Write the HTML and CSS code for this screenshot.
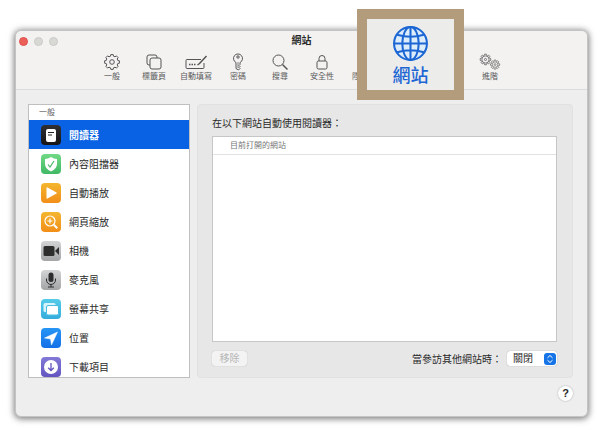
FILE: index.html
```html
<!DOCTYPE html>
<html lang="zh-Hant">
<head>
    <meta charset="UTF-8">
    <title>網站</title>
    <meta name="viewport" content="width=device-width, initial-scale=1.0">
    <link rel="stylesheet" href="styles.css">
</head>
<body>
    <div class="window">
        <header class="toolbar">
            <div class="titlebar">
                <div class="lights">
                    <span class="light close"></span>
                    <span class="light"></span>
                    <span class="light"></span>
                </div>
                <h1>網站</h1>
            </div>
            <nav class="tabs">
                <button class="tab">
                    <svg viewBox="0 0 18 18"><path id="gear" d="M16.4 7.800V10.200L14.800 10.500L14.200 12L15.100 13.400L13.400 15.100L12 14.200L10.500 14.800L10.200 16.400H7.800L7.500 14.800L6 14.200L4.600 15.100L2.900 13.400L3.800 12L3.200 10.500L1.600 10.200V7.800L3.200 7.500L3.800 6L2.900 4.600L4.600 2.900L6 3.800L7.500 3.200L7.800 1.600H10.200L10.500 3.200L12 3.800L13.400 2.900L15.100 4.600L14.200 6L14.800 7.500Z"/><circle cx="9" cy="9" r="2.300"/></svg>
                    <span>一般</span>
                </button>
                <button class="tab">
                    <svg viewBox="0 0 18 18"><path d="M5 12H4a2 2 0 0 1-2-2V4a2 2 0 0 1 2-2h6a2 2 0 0 1 2 2v1"/><rect x="5" y="5" width="11" height="11" rx="2"/></svg>
                    <span>標籤頁</span>
                </button>
                <button class="tab">
                    <svg class="wide" viewBox="0 0 24 18"><path d="M17 6.500H3a1 1 0 0 0-1 1v7a1 1 0 0 0 1 1h16a1 1 0 0 0 1-1V10"/><path d="M22.500 3l-7 7.500-2 1.500" stroke-width="1.500"/><path d="M5 11.500h7" stroke-width="1.500" stroke-dasharray="1.500 1"/></svg>
                    <span>自動填寫</span>
                </button>
                <button class="tab">
                    <svg viewBox="0 0 18 18"><path d="M7 9.500a4.500 4.500 0 1 1 4 0v2l-1 1 1 1-1 1 1 1-1.500 1.500-2.500-1.500z"/><circle cx="9" cy="4" r="1.200"/><path d="M9 9v6" stroke-width=".7"/></svg>
                    <span>密碼</span>
                </button>
                <button class="tab">
                    <svg viewBox="0 0 18 18"><circle cx="7.500" cy="7.500" r="5.500"/><path d="M11.500 11.500l5 5" stroke-width="1.500"/></svg>
                    <span>搜尋</span>
                </button>
                <button class="tab">
                    <svg viewBox="0 0 18 18"><rect x="4" y="8" width="10" height="8" rx="1.500"/><path d="M6 8V5.500a3 3 0 0 1 6 0V8"/></svg>
                    <span>安全性</span>
                </button>
                <button class="tab"><span>隱私權</span></button>
                <div class="current">
                    <button class="callout">
                        <svg viewBox="0 0 36 36"><circle cx="18" cy="18" r="16"/><ellipse cx="18" cy="18" rx="8" ry="16"/><path d="M18 2v32M2 18h32M5 9.500q13 4 26 0M5 26.500q13-4 26 0"/></svg>
                        <span>網站</span>
                    </button>
                </div>
                <button class="tab last">
                    <svg class="wide" viewBox="0 0 24 18"><g transform="translate(1 0) scale(.72)"><use href="#gear"/><circle cx="9" cy="9" r="5"/><circle cx="9" cy="9" r="1.500"/></g><g transform="translate(11.500 6) scale(.62)"><use href="#gear"/><circle cx="9" cy="9" r="4.500"/><circle cx="9" cy="9" r="1.500"/></g></svg>
                    <span>進階</span>
                </button>
            </nav>
        </header>

        <main class="content">
            <aside class="sidebar">
                <h2>一般</h2>
                <ul>
                    <li><button class="row selected">
                        <svg class="reader" viewBox="0 0 20 20"><rect x="5" y="4" width="10" height="13" rx="2" fill="#fff"/><path d="M7 7.500h6M7 10h4" stroke="#222"/></svg>閱讀器</button></li>
                    <li><button class="row">
                        <svg class="blocker" viewBox="0 0 20 20"><path d="M10 3q3 1.800 6 2v5q0 5-6 7.500Q4 15 4 10V5q3-.2 6-2z" fill="#fff"/><path d="M7 10.500l2 2.500 4-6" fill="none" stroke="#45b867" stroke-width="1.200"/></svg>內容阻擋器</button></li>
                    <li><button class="row">
                        <svg class="orange" viewBox="0 0 20 20"><path d="M5.500 5v10q0 1 1 .5l9-5q.8-.5 0-1l-9-5q-1-.5-1 .5z" fill="#fff"/></svg>自動播放</button></li>
                    <li><button class="row">
                        <svg class="orange" viewBox="0 0 20 20"><g fill="none" stroke="#fff" stroke-width="1.200"><circle cx="9" cy="9" r="5"/><path d="M9 6.500v5M6.500 9h5"/><path d="M12.800 12.800l3.500 3.500" stroke-width="2"/></g></svg>網頁縮放</button></li>
                    <li><button class="row">
                        <svg class="gray" viewBox="0 0 20 20"><rect x="2.500" y="5" width="11" height="10" rx="1.500" fill="#2d2d2d"/><path d="M14 10l4-4v8z" fill="#2d2d2d"/></svg>相機</button></li>
                    <li><button class="row">
                        <svg class="gray" viewBox="0 0 20 20"><rect x="7.500" y="2.500" width="5" height="9.500" rx="2.500" fill="#2d2d2d"/><path d="M5.500 8.500v1.500a4.500 4.500 0 0 0 9 0V8.500M10 14.500v2.500M7 17h6" fill="none" stroke="#2d2d2d"/></svg>麥克風</button></li>
                    <li><button class="row">
                        <svg class="cyan" viewBox="0 0 20 20"><rect x="2.500" y="4" width="12" height="9" rx="1.500" fill="#d8f3fc"/><rect x="5.500" y="6.500" width="12" height="9.500" rx="1.500" fill="#fff" stroke="#45bde3"/></svg>螢幕共享</button></li>
                    <li><button class="row">
                        <svg class="blue" viewBox="0 0 20 20"><path d="M16.500 4L3.500 10l6 1 1 6z" fill="#fff" stroke="#fff" stroke-linejoin="round" stroke-width=".5"/></svg>位置</button></li>
                    <li><button class="row">
                        <svg class="purple" viewBox="0 0 20 20"><circle cx="10" cy="10" r="7" fill="#fff"/><path d="M10 6v7.500M7.200 10.800L10 13.500l2.800-2.700" fill="none" stroke="#6354c0" stroke-width="1.300"/></svg>下載項目</button></li>
                </ul>
            </aside>

            <section class="panel">
                <h2>在以下網站自動使用閱讀器：</h2>
                <div class="sites">
                    <h3>目前打開的網站</h3>
                </div>
                <div class="actions">
                    <button class="remove" disabled>移除</button>
                    <label for="other">當參訪其他網站時：</label>
                    <div class="select">
                        <select id="other">
                            <option>關閉</option>
                            <option>開啟</option>
                        </select>
                        <svg viewBox="0 0 12 12"><rect width="12" height="12" rx="3" fill="#1674e6"/><path d="M3.500 4.800L6 2.500l2.500 2.300M3.500 7.200L6 9.500l2.500-2.300" fill="none" stroke="#fff"/></svg>
                    </div>
                </div>
            </section>
        </main>

        <footer class="footer">
            <button class="help">?</button>
        </footer>
    </div>
</body>
</html>
```

FILE: styles.css
```css
* {
    box-sizing: border-box;
}
body {
    margin: 0;
    padding: 30px 23px 14px 15px;
    background: #fff;
    color: #292929;
    font-family: "Liberation Sans", "Noto Sans CJK TC", sans-serif;
    font-size: 12px;
}
h1, h2, h3, ul {
    margin: 0;
    padding: 0;
    font-weight: normal;
}
button {
    padding: 0;
    border: none;
    background: none;
    color: inherit;
    font: inherit;
}
svg {
    flex: none;
}
.window {
    background: #eee;
    border: 1px solid #c4c4c4;
    border-radius: 6px;
    box-shadow: 0 1px 6px 1px rgba(0, 0, 0, 0.5);
}

/* Toolbar */
.toolbar {
    height: 59px;
    border-bottom: 1px solid #dcdcdc;
    border-radius: 6px 6px 0 0;
    background: #f3f2f1;
}
.titlebar {
    display: grid;
    grid-template-columns: 1fr auto 1fr;
    align-items: center;
    height: 20px;
}
.titlebar h1 {
    font-size: 10px;
    line-height: 20px;
    font-weight: bold;
}
.lights {
    display: flex;
    gap: 6px;
    padding-left: 3px;
}
.light {
    width: 9px;
    height: 9px;
    border: 1px solid #cacac8;
    border-radius: 50%;
    background: #d8d8d5;
}
.light.close {
    border-color: #df514c;
    background: #ec5f59;
}
.tabs {
    display: grid;
    grid-template-columns: repeat(10, 42px);
    justify-content: center;
    padding-right: 1px;
}
.tab {
    display: flex;
    flex-direction: column;
    align-items: center;
    justify-content: flex-end;
    height: 32px;
    color: #5c5c5c;
    font-size: 8px;
    line-height: 12px;
    white-space: nowrap;
}
.tab svg {
    width: 18px;
    height: 18px;
    fill: none;
    stroke: #555;
    stroke-linejoin: round;
}
.tab .wide {
    width: 24px;
}
.tab.last {
    grid-column: 10;
}
.current {
    position: relative;
}
/* Enlarged tab that sits over the toolbar */
.callout {
    position: absolute;
    top: -42px;
    left: -28px;
    display: flex;
    flex-direction: column;
    align-items: center;
    width: 107px;
    height: 91px;
    padding-top: 6px;
    border: 10px solid #b29c7c;
    background: #ececeb;
    color: #1b66d4;
    font-size: 18px;
    font-weight: 500;
    line-height: 28px;
}
.callout svg {
    width: 37px;
    height: 37px;
    fill: #dcecfa;
    stroke: #1b66d4;
    stroke-width: 2;
}
.callout ellipse, .callout path {
    fill: none;
}

/* Content */
.content {
    display: grid;
    grid-template-columns: 162px 1fr;
    gap: 7px;
    padding: 14px 14px 0 12px;
}
.sidebar {
    height: 274px;
    overflow: hidden;
    border: 1px solid #bfbfbf;
    background: #fff;
}
.sidebar h2 {
    padding-left: 10px;
    color: #666;
    font-size: 8px;
    line-height: 15px;
}
.sidebar ul {
    list-style: none;
}
.row {
    display: flex;
    align-items: center;
    gap: 8px;
    width: 100%;
    height: 29px;
    padding-left: 12px;
    font-size: 10px;
}
.row.selected {
    background: #0862e3;
    color: #fff;
    font-weight: bold;
}
.row svg {
    width: 20px;
    height: 20px;
    border-radius: 4px;
}
.reader { background: linear-gradient(#303033, #151518); }
.blocker { background: linear-gradient(#72d985, #40b864); }
.orange { background: linear-gradient(#f4b62f, #f28e18); }
.gray { background: linear-gradient(#d2d4d5, #a2a4a5); }
.cyan { background: linear-gradient(#55cbea, #36acdc); }
.blue { background: linear-gradient(#2695f5, #1470e7); }
.purple { background: linear-gradient(#8379d7, #6354c0); }

/* Panel */
.panel {
    display: flex;
    flex-direction: column;
    padding: 11px 15px 11px 14px;
    border: 1px solid #e1e1e1;
    border-radius: 4px;
    background: #e7e7e7;
}
.panel h2 {
    font-size: 10px;
    line-height: 16px;
}
.sites {
    flex: 1;
    margin: 4px 0 8px;
    border: 1px solid #c6c6c6;
    background: #fff;
}
.sites h3 {
    padding-left: 17px;
    border-bottom: 1px solid #e2e2e2;
    color: #777;
    font-size: 8px;
    line-height: 17px;
}
.actions {
    display: flex;
    align-items: center;
    height: 16px;
    font-size: 10px;
}
.remove {
    width: 35px;
    height: 15px;
    margin-right: auto;
    border-radius: 3px;
    background: #f3f3f3;
    box-shadow: 0 0 1px rgba(0, 0, 0, 0.3);
    color: #b5b5b5;
    line-height: 15px;
}
.select {
    position: relative;
    margin-left: 5px;
}
.select select {
    display: block;
    appearance: none;
    width: 50px;
    height: 15px;
    padding: 0 0 0 6px;
    border: none;
    border-radius: 3px;
    background: #fff;
    box-shadow: 0 0 1px rgba(0, 0, 0, 0.4);
    color: inherit;
    font: inherit;
    line-height: 15px;
}
.select svg {
    position: absolute;
    top: 2px;
    right: 1px;
    width: 12px;
    height: 12px;
    pointer-events: none;
}
.footer {
    display: flex;
    justify-content: flex-end;
    padding: 8px 14px 15px;
}
.help {
    width: 15px;
    height: 15px;
    border-radius: 50%;
    background: #fff;
    box-shadow: 0 0 2px rgba(0, 0, 0, 0.3);
    font-size: 11px;
    font-weight: bold;
    line-height: 15px;
}
```
